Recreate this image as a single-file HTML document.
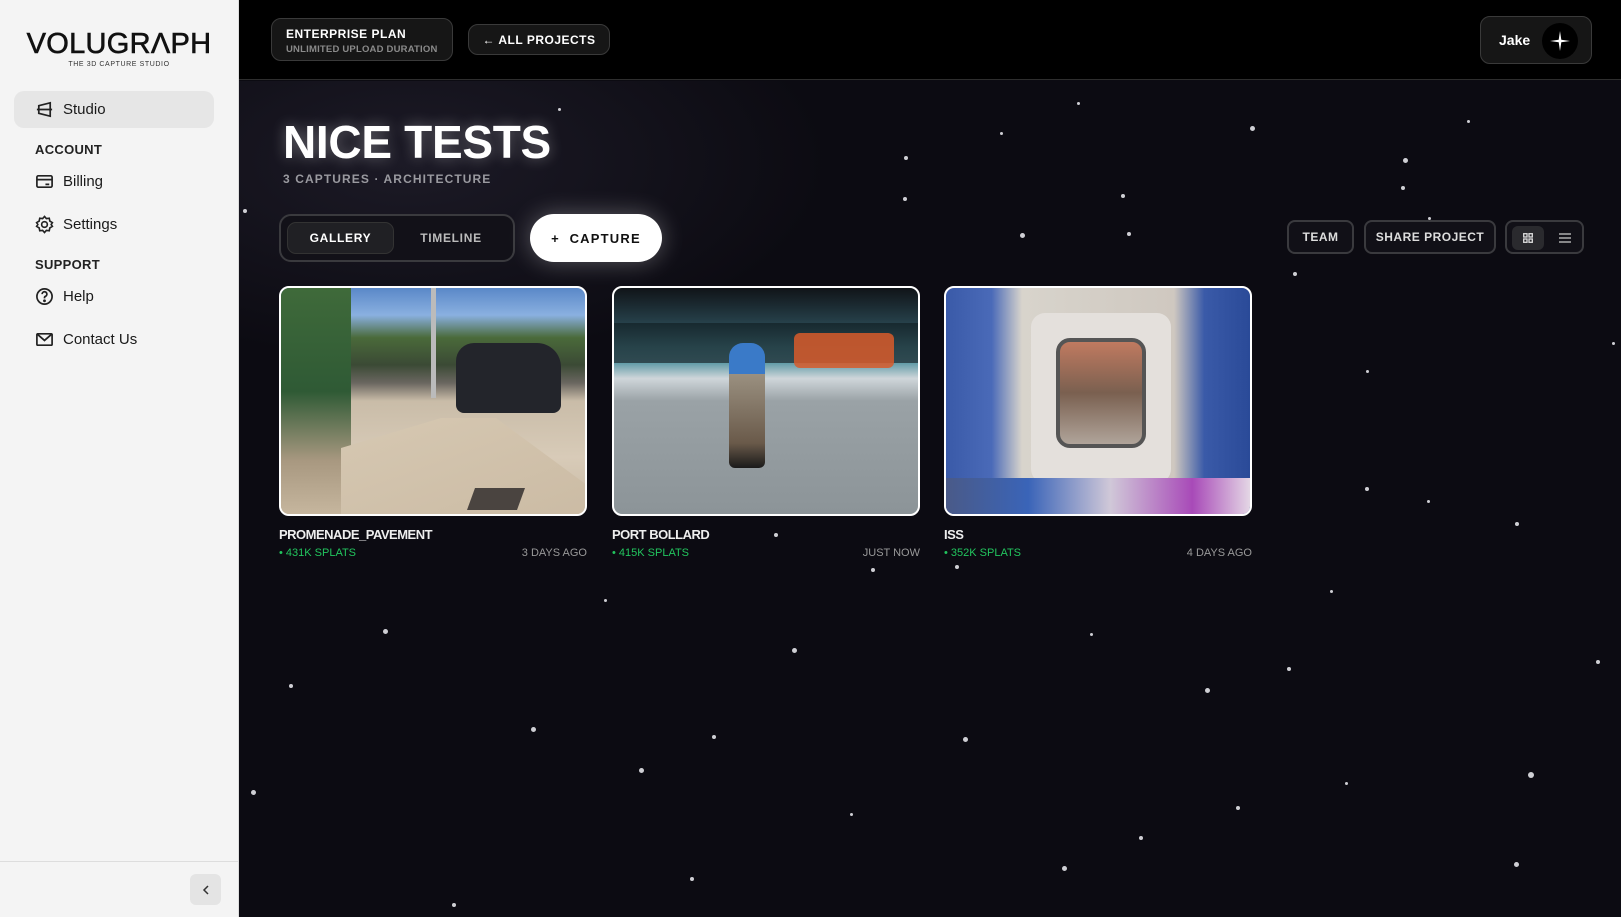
<!DOCTYPE html>
<html><head><meta charset="utf-8"><style>
*{box-sizing:border-box;margin:0;padding:0}
body{width:1621px;height:917px;overflow:hidden;font-family:"Liberation Sans",sans-serif;background:#0c0b12;position:relative}
.side{position:absolute;left:0;top:0;width:239px;height:917px;background:#f4f4f4;border-right:1px solid #ddd}
.logo{position:absolute;left:20px;top:30px;width:198px;text-align:center}
.logo .t{font-size:29px;letter-spacing:0.3px;color:#111;line-height:28px;font-weight:400;-webkit-text-stroke:0.6px #111}
.logo .s{font-size:7px;letter-spacing:0.6px;color:#333;margin-top:3px}
.nav{position:absolute;left:35px;font-size:15px;color:#1a1a1a;display:flex;align-items:center;gap:9px}
.nav svg{width:19px;height:19px}
.sec{position:absolute;left:35px;font-size:13px;font-weight:700;color:#222;letter-spacing:.3px}
.pill{position:absolute;left:14px;top:91px;width:200px;height:37px;background:#e6e6e6;border-radius:10px}
.foot{position:absolute;left:0;top:861px;width:239px;border-top:1px solid #ddd}
.coll{position:absolute;left:190px;top:874px;width:31px;height:31px;background:#e4e4e4;border-radius:6px;display:flex;align-items:center;justify-content:center}
.hdr{position:absolute;left:239px;top:0;width:1382px;height:80px;background:#000;border-bottom:1px solid #2e2e2e}
.box{position:absolute;border:1px solid #3a3a3a;background:#161616;border-radius:10px;color:#fff}
.main{position:absolute;left:239px;top:81px;width:1382px;height:836px;background:radial-gradient(ellipse 420px 200px at 170px 80px,#1c1a26,transparent),#0c0b12}
.star{position:absolute;background:#cfcfd4;border-radius:50%}
.btn{position:absolute;border:2px solid #3a3a3e;border-radius:8px;color:#ddd;font-size:12px;font-weight:700;letter-spacing:.5px;display:flex;align-items:center;justify-content:center;background:#111017}
.card{position:absolute;top:286px;width:308px;height:230px;border:2px solid #fff;border-radius:10px;overflow:hidden}
.ct{position:absolute;top:527px;font-size:13px;font-weight:700;color:#eee;letter-spacing:-.5px}
.cm{position:absolute;top:547px;font-size:11px;color:#22c55e;width:308px}
.cm span{position:absolute;right:0;color:#999}
</style></head><body>
<div class="side">
 <div class="logo"><div class="t">VOLUGR&#923;PH</div><div class="s">THE 3D CAPTURE STUDIO</div></div>
 <div class="pill"></div>
 <div class="nav" style="top:100px"><svg viewBox="0 0 20 20" fill="none" stroke="#222" stroke-width="1.8"><path d="M4 6l12-3v14L4 14z M2 10h16"/></svg>Studio</div>
 <div class="sec" style="top:142px">ACCOUNT</div>
 <div class="nav" style="top:172px"><svg viewBox="0 0 20 20" fill="none" stroke="#222" stroke-width="1.8"><rect x="2" y="4" width="16" height="12" rx="1.5"/><path d="M2 8h16M11 13h4"/></svg>Billing</div>
 <div class="nav" style="top:215px"><svg viewBox="0 0 20 20" fill="none" stroke="#222" stroke-width="1.7"><circle cx="10" cy="10" r="3"/><path d="M10 1.5l2 2.3 3-.4.6 3 2.7 1.6-1.3 2 1.3 2-2.7 1.6-.6 3-3-.4-2 2.3-2-2.3-3 .4-.6-3L1.7 12l1.3-2-1.3-2 2.7-1.6.6-3 3 .4z"/></svg>Settings</div>
 <div class="sec" style="top:257px">SUPPORT</div>
 <div class="nav" style="top:287px"><svg viewBox="0 0 20 20" fill="none" stroke="#222" stroke-width="1.8"><circle cx="10" cy="10" r="8"/><path d="M7.5 7.5a2.5 2.5 0 1 1 3.5 2.3c-.7.3-1 .8-1 1.5v.7"/><circle cx="10" cy="14.5" r=".6" fill="#222"/></svg>Help</div>
 <div class="nav" style="top:330px"><svg viewBox="0 0 20 20" fill="none" stroke="#222" stroke-width="1.8"><rect x="2" y="4" width="16" height="12" rx="1"/><path d="M2 4l8 7 8-7"/></svg>Contact Us</div>
 <div class="foot"></div>
 <div class="coll"><svg width="12" height="12" viewBox="0 0 12 12" fill="none" stroke="#333" stroke-width="1.5"><path d="M8 2L4 6l4 4"/></svg></div>
</div>
<div class="hdr">
 <div class="box" style="left:32px;top:18px;width:182px;height:43px;padding:8px 14px">
  <div style="font-size:12px;font-weight:700;letter-spacing:.5px">ENTERPRISE PLAN</div>
  <div style="font-size:9.5px;font-weight:700;color:#8a8a8a;margin-top:3px;letter-spacing:.2px">UNLIMITED UPLOAD DURATION</div></div>
 <div class="box" style="left:229px;top:24px;width:142px;height:31px;font-size:12px;font-weight:700;letter-spacing:.5px;display:flex;align-items:center;justify-content:center">&#8592; ALL PROJECTS</div>
 <div class="box" style="left:1241px;top:16px;width:112px;height:48px">
  <div style="position:absolute;left:18px;top:15px;font-size:14px;font-weight:700">Jake</div>
  <div style="position:absolute;left:61px;top:6px;width:36px;height:36px;border-radius:50%;background:#000;display:flex;align-items:center;justify-content:center"><svg width="20" height="20" viewBox="0 0 20 20"><path d="M10 0L11.3 8.7 20 10 11.3 11.3 10 20 8.7 11.3 0 10 8.7 8.7z" fill="#fff"/></svg></div>
 </div>
</div>
<div class="main">
 <div style="position:absolute;left:44px;top:34px;font-size:46px;font-weight:700;color:#fff;letter-spacing:-0.3px;text-shadow:0 0 14px rgba(255,255,255,.35)">NICE TESTS</div>
 <div style="position:absolute;left:44px;top:91px;font-size:12px;font-weight:700;color:#9a9aa0;letter-spacing:1.1px">3 CAPTURES · ARCHITECTURE</div>
 <div style="position:absolute;left:40px;top:133px;width:236px;height:48px;border:2px solid #3a3a3e;border-radius:12px;background:#121118">
  <div style="position:absolute;left:6px;top:6px;width:107px;height:32px;background:#202024;border:1px solid #333;border-radius:9px;color:#fff;font-size:12px;font-weight:700;letter-spacing:.7px;display:flex;align-items:center;justify-content:center">GALLERY</div>
  <div style="position:absolute;left:120px;top:6px;width:100px;height:32px;color:#bbb;font-size:12px;font-weight:700;letter-spacing:.7px;display:flex;align-items:center;justify-content:center">TIMELINE</div>
 </div>
 <div style="position:absolute;left:291px;top:133px;width:132px;height:48px;background:#fff;border-radius:24px;box-shadow:0 0 24px rgba(255,255,255,.3);color:#111;font-size:13px;font-weight:700;letter-spacing:1.2px;display:flex;align-items:center;justify-content:center">+&nbsp;&nbsp;CAPTURE</div>
 <div class="btn" style="left:1048px;top:139px;width:67px;height:34px">TEAM</div>
 <div class="btn" style="left:1125px;top:139px;width:132px;height:34px">SHARE PROJECT</div>
 <div class="btn" style="left:1266px;top:139px;width:79px;height:34px">
  <div style="position:absolute;left:5px;top:4px;width:32px;height:24px;background:#2a2a2e;border-radius:6px;display:flex;align-items:center;justify-content:center"><svg width="10" height="10" viewBox="0 0 10 10" fill="none" stroke="#ddd" stroke-width="1.3"><rect x=".7" y=".7" width="3.3" height="3.3"/><rect x="6" y=".7" width="3.3" height="3.3"/><rect x=".7" y="6" width="3.3" height="3.3"/><rect x="6" y="6" width="3.3" height="3.3"/></svg></div>
  <svg style="position:absolute;left:52px;top:11px" width="12" height="10" viewBox="0 0 12 10" stroke="#ccc" stroke-width="1.3"><path d="M0 1h12M0 5h12M0 9h12"/></svg>
 </div>
</div>
<div class="card" style="left:279px;background:linear-gradient(180deg,#5a88c8 0%,#8ab0e0 12%,#4a6a3a 22%,#3b4a35 34%,#6a6660 42%,#c9bca8 50%,#d8cbb8 75%,#c8b9a4 100%)">
 <div style="position:absolute;left:0;top:0;width:70px;height:230px;background:linear-gradient(180deg,#3f6a3a,#2f5a35 45%,#a89880 75%,#c8b8a0)"></div>
 <div style="position:absolute;left:60px;top:130px;width:250px;height:100px;background:linear-gradient(160deg,#d6c8b2,#cbbba4);clip-path:polygon(40% 0,62% 0,100% 70%,100% 100%,0 100%,0 30%)"></div>
 <div style="position:absolute;left:190px;top:200px;width:50px;height:22px;background:#4a4440;transform:skewX(-20deg)"></div>
 <div style="position:absolute;left:175px;top:55px;width:105px;height:70px;background:#23252b;border-radius:18px 24px 8px 8px"></div>
 <div style="position:absolute;left:150px;top:0;width:5px;height:110px;background:#bbb"></div>
</div>
<div class="card" style="left:612px;background:linear-gradient(180deg,#101418 0%,#27424c 16%,#4a8590 26%,#5f9aa6 33%,#cfd6da 40%,#9aa2a6 50%,#8c9498 100%)">
 <div style="position:absolute;left:0;top:35px;width:308px;height:40px;background:linear-gradient(180deg,#0e1a1e,#101418);opacity:.6"></div>
 <div style="position:absolute;left:180px;top:45px;width:100px;height:35px;background:#d85a2a;border-radius:6px;opacity:.85"></div>
 <div style="position:absolute;left:115px;top:55px;width:36px;height:125px;background:linear-gradient(180deg,#3a7ac8 0 25%,#9a9080 25%,#6a5a4a 80%,#1a1a1a 100%);border-radius:14px 14px 6px 6px"></div>
</div>
<div class="card" style="left:944px;background:linear-gradient(90deg,#3a5aa8,#4a6ab8 15%,#d8d4cc 25%,#cfc8c0 75%,#3a5aa8 85%,#2a4a98)">
 <div style="position:absolute;left:85px;top:25px;width:140px;height:170px;background:#e4e0dc;border-radius:14px"></div>
 <div style="position:absolute;left:110px;top:50px;width:90px;height:110px;background:linear-gradient(180deg,#c07a60,#7a6050 50%,#b0a49a);border-radius:14px;border:4px solid #555"></div>
 <div style="position:absolute;left:0;top:190px;width:308px;height:40px;background:linear-gradient(90deg,#4a5a88,#3a64b8,#d0c8d8,#a84ab8 80%,#e8e0e8)"></div>
</div>
<div class="ct" style="left:279px">PROMENADE_PAVEMENT</div>
<div class="cm" style="left:279px">• 431K SPLATS<span>3 DAYS AGO</span></div>
<div class="ct" style="left:612px">PORT BOLLARD</div>
<div class="cm" style="left:612px">• 415K SPLATS<span>JUST NOW</span></div>
<div class="ct" style="left:944px">ISS</div>
<div class="cm" style="left:944px">• 352K SPLATS<span>4 DAYS AGO</span></div>
<div class="star" style="left:558px;top:108px;width:3px;height:3px"></div>
<div class="star" style="left:904px;top:156px;width:4px;height:4px"></div>
<div class="star" style="left:1000px;top:132px;width:3px;height:3px"></div>
<div class="star" style="left:1077px;top:102px;width:3px;height:3px"></div>
<div class="star" style="left:1250px;top:126px;width:5px;height:5px"></div>
<div class="star" style="left:1403px;top:158px;width:5px;height:5px"></div>
<div class="star" style="left:1401px;top:186px;width:4px;height:4px"></div>
<div class="star" style="left:1467px;top:120px;width:3px;height:3px"></div>
<div class="star" style="left:1121px;top:194px;width:4px;height:4px"></div>
<div class="star" style="left:903px;top:197px;width:4px;height:4px"></div>
<div class="star" style="left:1020px;top:233px;width:5px;height:5px"></div>
<div class="star" style="left:1127px;top:232px;width:4px;height:4px"></div>
<div class="star" style="left:1293px;top:272px;width:4px;height:4px"></div>
<div class="star" style="left:1366px;top:370px;width:3px;height:3px"></div>
<div class="star" style="left:1427px;top:500px;width:3px;height:3px"></div>
<div class="star" style="left:1515px;top:522px;width:4px;height:4px"></div>
<div class="star" style="left:1596px;top:660px;width:4px;height:4px"></div>
<div class="star" style="left:1528px;top:772px;width:6px;height:6px"></div>
<div class="star" style="left:1514px;top:862px;width:5px;height:5px"></div>
<div class="star" style="left:1612px;top:342px;width:3px;height:3px"></div>
<div class="star" style="left:871px;top:568px;width:4px;height:4px"></div>
<div class="star" style="left:792px;top:648px;width:5px;height:5px"></div>
<div class="star" style="left:774px;top:533px;width:4px;height:4px"></div>
<div class="star" style="left:383px;top:629px;width:5px;height:5px"></div>
<div class="star" style="left:289px;top:684px;width:4px;height:4px"></div>
<div class="star" style="left:251px;top:790px;width:5px;height:5px"></div>
<div class="star" style="left:531px;top:727px;width:5px;height:5px"></div>
<div class="star" style="left:639px;top:768px;width:5px;height:5px"></div>
<div class="star" style="left:712px;top:735px;width:4px;height:4px"></div>
<div class="star" style="left:963px;top:737px;width:5px;height:5px"></div>
<div class="star" style="left:1205px;top:688px;width:5px;height:5px"></div>
<div class="star" style="left:1062px;top:866px;width:5px;height:5px"></div>
<div class="star" style="left:1139px;top:836px;width:4px;height:4px"></div>
<div class="star" style="left:1236px;top:806px;width:4px;height:4px"></div>
<div class="star" style="left:1345px;top:782px;width:3px;height:3px"></div>
<div class="star" style="left:1287px;top:667px;width:4px;height:4px"></div>
<div class="star" style="left:1090px;top:633px;width:3px;height:3px"></div>
<div class="star" style="left:955px;top:565px;width:4px;height:4px"></div>
<div class="star" style="left:604px;top:599px;width:3px;height:3px"></div>
<div class="star" style="left:690px;top:877px;width:4px;height:4px"></div>
<div class="star" style="left:452px;top:903px;width:4px;height:4px"></div>
<div class="star" style="left:850px;top:813px;width:3px;height:3px"></div>
<div class="star" style="left:1365px;top:487px;width:4px;height:4px"></div>
<div class="star" style="left:1330px;top:590px;width:3px;height:3px"></div>
<div class="star" style="left:243px;top:209px;width:4px;height:4px"></div>
<div class="star" style="left:1428px;top:217px;width:3px;height:3px"></div>
</body></html>
